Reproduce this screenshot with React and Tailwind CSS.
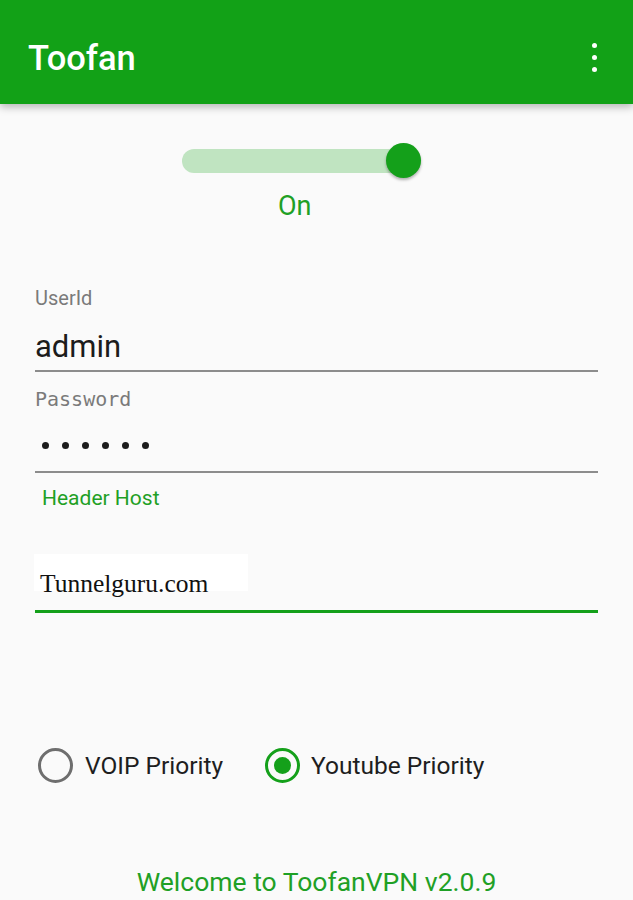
import React from 'react';

const App = () => {
  return (
    <div className="min-h-screen bg-[#fafafa]" style={{ fontFamily: 'Roboto, "Liberation Sans", sans-serif' }}>
      {/* App bar */}
      <div className="relative z-10 h-[104px] bg-[#12a117] flex items-center justify-between pt-[13px] pl-[28px] pr-[36px] shadow-[0_3px_8px_rgba(0,0,0,0.28)]">
        <h1 className="text-[34.5px] leading-none font-medium text-white">Toofan</h1>
        <div className="flex flex-col gap-[7px] -mt-[3px]">
          <span className="block w-[5px] h-[5px] rounded-full bg-white" />
          <span className="block w-[5px] h-[5px] rounded-full bg-white" />
          <span className="block w-[5px] h-[5px] rounded-full bg-white" />
        </div>
      </div>

      {/* Switch */}
      <div className="mt-[39px] ml-[182px] w-[239px] h-[35px] relative flex items-center">
        <div className="w-full h-[24px] rounded-full bg-[#c0e4c1]" />
        <div className="absolute right-0 top-0 w-[35px] h-[35px] rounded-full bg-[#14a01a] shadow-[0_2px_3px_rgba(0,0,0,0.3)]" />
      </div>
      <p className="mt-[13px] ml-[278px] text-[27px] leading-[30px] text-[#1fa025]">On</p>

      {/* Form */}
      <div className="mx-[35px]">
        <p className="mt-[65px] text-[20px] leading-[24px] text-[#7a7a7a]">UserId</p>
        <div className="mt-[19px] pb-[5px] border-b-2 border-[#8c8c8c]">
          <p className="text-[31px] leading-[36px] text-[#1c1c1c]">admin</p>
        </div>

        <p
          className="mt-[15px] text-[20px] leading-[24px] text-[#7a7a7a]"
          style={{ fontFamily: '"DejaVu Sans Mono", "Liberation Mono", monospace' }}
        >
          Password
        </p>
        <div className="mt-[31px] pb-[22px] pl-[7px] border-b-2 border-[#8c8c8c] flex gap-[13px]">
          {[0, 1, 2, 3, 4, 5].map((i) => (
            <span key={i} className="block w-[7px] h-[7px] rounded-full bg-[#1c1c1c]" />
          ))}
        </div>

        <p className="mt-[13px] pl-[7px] text-[21px] leading-[25px] text-[#1fa025]">Header Host</p>

        <div className="mt-[43px] -ml-[1px] w-[214px] h-[37px] bg-white pt-[16px] pl-[6px]">
          <p
            className="text-[25.5px] leading-[28px] text-[#111]"
            style={{ fontFamily: '"Liberation Serif", "Times New Roman", serif' }}
          >
            Tunnelguru.com
          </p>
        </div>
        <div className="mt-[19px] h-[3px] bg-[#14a01a]" />
      </div>

      {/* Radios */}
      <div className="mt-[135px] ml-[38px] flex items-center gap-[42px]">
        <label className="flex items-center gap-[12px]">
          <span className="block w-[35px] h-[35px] rounded-full border-[3px] border-[#6e6e6e]" />
          <span className="text-[24.5px] leading-[28px] text-[#1e1e1e]">VOIP Priority</span>
        </label>
        <label className="flex items-center gap-[11px]">
          <span className="w-[35px] h-[35px] rounded-full border-[3px] border-[#14a01a] flex items-center justify-center">
            <span className="block w-[17px] h-[17px] rounded-full bg-[#14a01a]" />
          </span>
          <span className="text-[24.5px] leading-[28px] text-[#1e1e1e]">Youtube Priority</span>
        </label>
      </div>

      <p className="mt-[84px] text-center text-[26.5px] leading-[30px] text-[#1fa025]">
        Welcome to ToofanVPN v2.0.9
      </p>
    </div>
  );
};

export default App;
